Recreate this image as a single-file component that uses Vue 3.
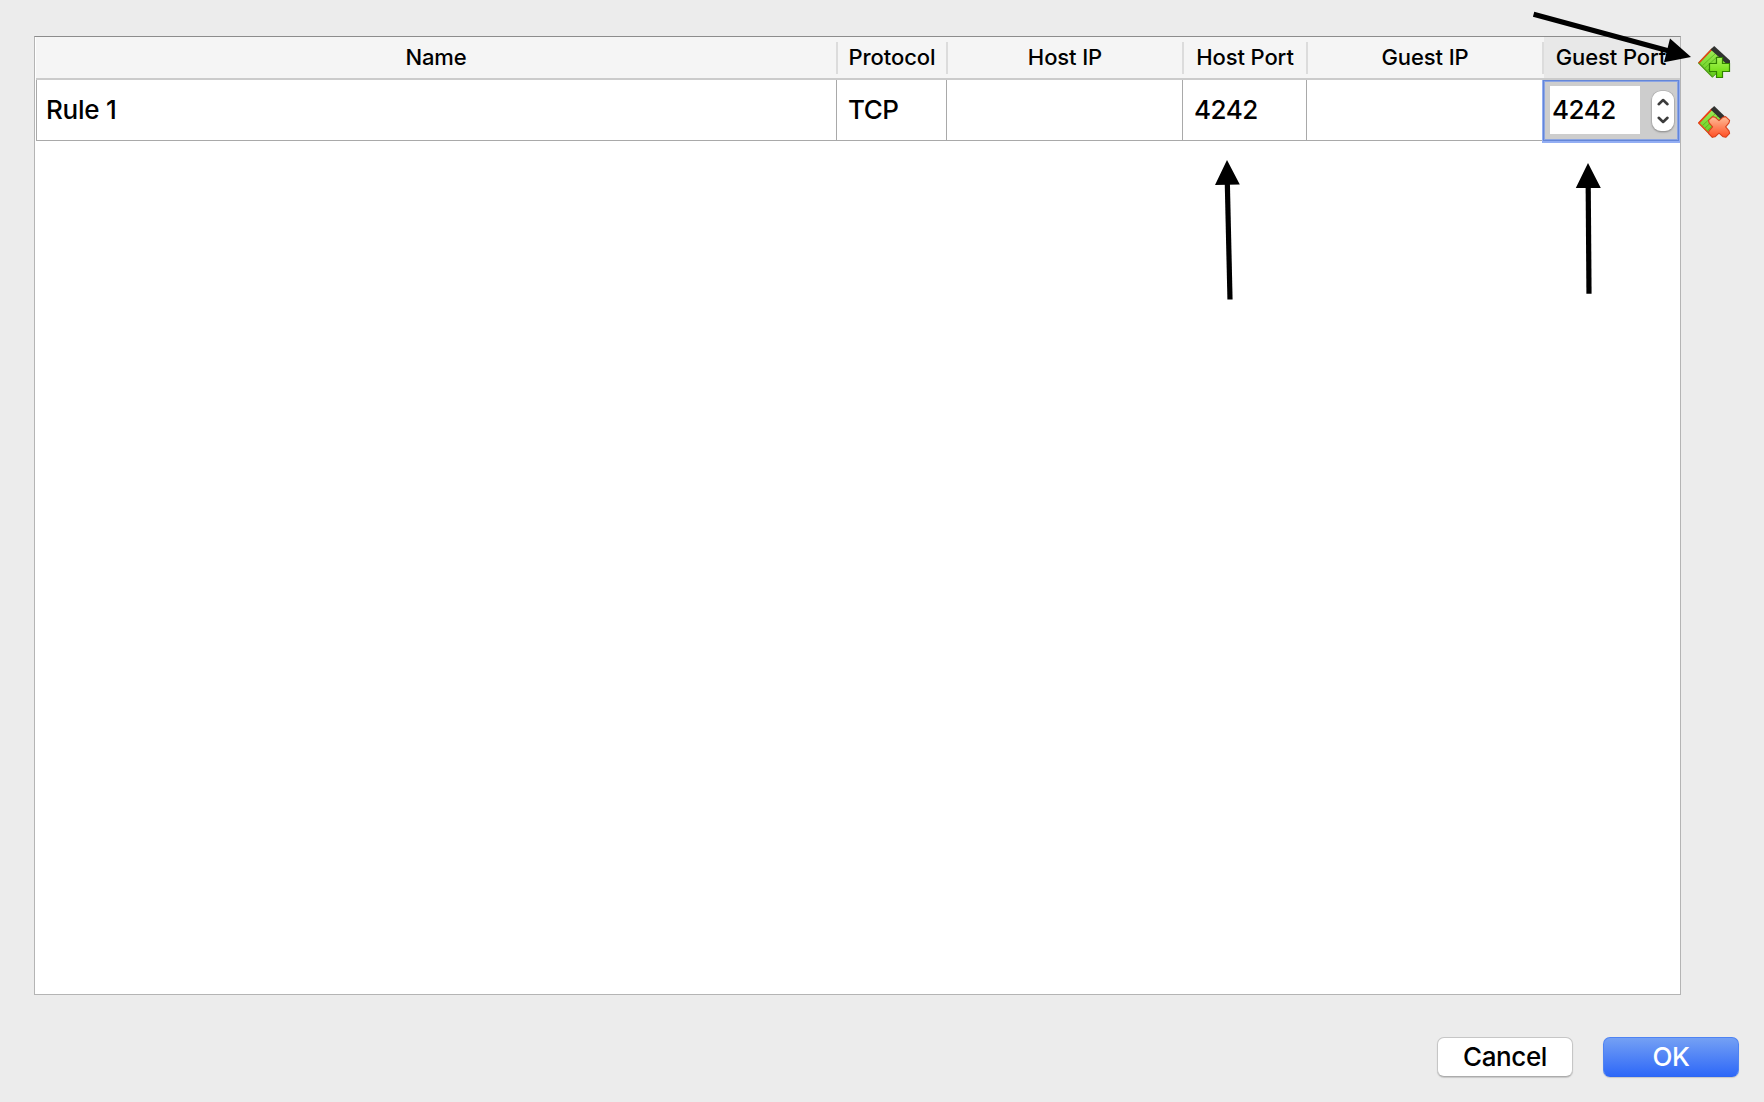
<script setup>
const columns = [
  { title: 'Name', value: 'Rule 1', cls: 'name' },
  { title: 'Protocol', value: 'TCP', cls: 'proto' },
  { title: 'Host IP', value: '', cls: 'hip' },
  { title: 'Host Port', value: '4242', cls: 'hport' },
  { title: 'Guest IP', value: '', cls: 'gip' },
]
</script>

<template>
  <div class="dialog">
    <div class="main">
      <div class="table">
        <div class="row head">
          <div v-for="c in columns" :key="c.title" class="th" :class="c.cls"><span>{{ c.title }}</span></div>
          <div class="th gport"><span>Guest Port</span></div>
        </div>
        <div class="row body">
          <div v-for="c in columns" :key="c.title" class="td" :class="c.cls"><span>{{ c.value }}</span></div>
          <div class="editor">
            <div class="field"><span>4242</span></div>
            <div class="stepper">
              <svg width="22" height="40" viewBox="0 0 22 40" fill="none" stroke="#3c3c3c" stroke-width="2.6" stroke-linecap="round" stroke-linejoin="round">
                <path d="M6.7 13.2 L11.1 9 L15.5 13.2 M6.7 26.8 L11.1 31 L15.5 26.8" />
              </svg>
            </div>
          </div>
        </div>
      </div>
      <div class="tools">
        <svg v-for="kind in ['add', 'remove']" :key="kind" width="34" height="32" viewBox="0 0 34 32">
          <defs>
            <linearGradient :id="kind + 'card'" x1="0" y1="0" x2="0" y2="1">
              <stop offset="0" stop-color="#a2ec58" /><stop offset="1" stop-color="#5fca18" />
            </linearGradient>
            <linearGradient :id="kind + 'mark'" x1="0" y1="0" x2="0" y2="1">
              <stop offset="0" :stop-color="kind === 'add' ? '#a9f45a' : '#ffbd98'" />
              <stop offset="1" :stop-color="kind === 'add' ? '#62d800' : '#ff4f24'" />
            </linearGradient>
          </defs>
          <path d="M.8 17 L14.5 2.5 L29 17 L14.5 31.2 Z" :fill="`url(#${kind}card)`" stroke="#4f9c1b" stroke-width="1" />
          <path d="M4.5 19.5 L18 7 M7 22 L20.5 9.5 M9.5 24.5 L23 12 M12 27 L24 16" stroke="#4fae16" stroke-width=".7" />
          <path d="M14.5 31 L.8 17 L14 3" fill="none" :stroke="kind === 'add' ? '#55a21e' : '#e64b20'" stroke-width="1.4" />
          <path d="M.8 17 L14 3" stroke="#ed4219" stroke-width="1.5" />
          <path v-if="kind === 'add'" d="M12.6 3.6 L16.2 0 L32 14.6 L32 17 L27.5 17 Z" fill="#303230" />
          <path v-else d="M12.6 3.6 L16.2 0 L27 10.5 L22.5 13 Z" fill="#303230" />
          <path v-if="kind === 'add'" d="M18.5 11.5 H24.5 V17.5 H31.5 V25.5 H24.5 V31.5 H18.5 V25.5 H11.5 V17.5 H18.5 Z" fill="url(#addmark)" stroke="#318200" stroke-width="1.2" />
          <path v-else d="M14.6 10.6 L17 11.2 L21 14.6 L25 11.2 L27.6 10.6 L31.6 14.4 L31 16.8 L27.6 20.9 L31 24.8 L31.6 27.4 L27.8 31.3 L25.2 30.8 L21 27.2 L17 30.8 L14.4 31.3 L10.5 27.4 L11.1 24.8 L14.6 20.9 L11.1 16.8 L10.5 14.4 Z" fill="url(#removemark)" stroke="#d8411c" stroke-width="1.1" stroke-linejoin="round" />
        </svg>
      </div>
    </div>
    <div class="buttons">
      <button class="btn cancel"><span>Cancel</span></button>
      <button class="btn ok"><span>OK</span></button>
    </div>
    <svg class="arrows" width="1764" height="320" viewBox="0 0 1764 320">
      <g stroke="#000" stroke-width="5.2">
        <path d="M1533.6 14.2 L1670 51.2" />
        <path d="M1227.3 182 L1230 299.5" />
        <path d="M1588.2 185 L1589 293.7" />
      </g>
      <path d="M1691 57 L1670 38.6 L1664 62.2 Z M1227 160 L1239.8 184.4 L1215 185 Z M1588 163 L1600.8 188 L1575.8 188 Z" />
    </svg>
  </div>
</template>

<style>
body { margin: 0; background: #ececec; }
</style>

<style scoped>
.dialog {
  position: relative;
  box-sizing: border-box;
  width: 1764px;
  height: 1102px;
  padding: 36px 25px 0 34px;
  background: #ececec;
  color: #000;
  font-family: Inter, "Liberation Sans", sans-serif;
  overflow: hidden;
}
.main { display: flex; gap: 17px; }
.table {
  box-sizing: border-box;
  width: 1647px;
  height: 959px;
  border: 1px solid #b4b4b4;
  border-top-color: #8c8c8c;
  padding-left: 1px;
  background: #fff;
}
.row { display: flex; }
.head { height: 41px; background: #f5f5f5; border-bottom: 2px solid #cbcbcb; }
.th {
  box-sizing: border-box;
  display: flex;
  align-items: center;
  justify-content: center;
  font-size: 22px;
  letter-spacing: -.1px;
  font-weight: 500;
  white-space: nowrap;
  padding-bottom: 1px;
  padding-right: 2px;
  background: linear-gradient(#dcdcdc, #dcdcdc) right 0 top 5px / 2px 32px no-repeat;
}
.name { width: 802px; }
.proto { width: 110px; }
.hip { width: 236px; }
.hport { width: 124px; }
.gip { width: 236px; }
.th.gport { width: 136px; background: #e8e8e8; }
.body { height: 61px; }
.td {
  box-sizing: border-box;
  display: flex;
  align-items: center;
  border-right: 1px solid #a9a9a9;
  border-bottom: 1px solid #a9a9a9;
  padding: 0 0 2px 11px;
  font-size: 26px;
  letter-spacing: -.5px;
  font-weight: 500;
}
.td.name { width: 801px; border-left: 1px solid #a9a9a9; padding-left: 9px; letter-spacing: -.25px; }
.td.gip { border-right: 0; width: 235px; }
.editor {
  box-sizing: border-box;
  width: 138px;
  height: 63px;
  border: 1px solid #93aef3;
  border-width: 0 1px 2px 1px;
  padding: 5px 4px 0 6px;
  display: flex;
  gap: 12px;
  background: #cdcdcd;
  box-shadow: inset 0 0 0 1px #6486d8, inset 0 0 0 2px #8ca5e3;
}
.field {
  box-sizing: border-box;
  width: 90px;
  height: 48px;
  margin-top: 1px;
  margin-left: 1px;
  padding: 0 0 2px 2px;
  display: flex;
  align-items: center;
  background: #fff;
  font-size: 26px;
  letter-spacing: -.5px;
  font-weight: 500;
}
.stepper {
  width: 22px;
  height: 40px;
  margin-top: 6px;
  border-radius: 9px;
  background: #fff;
  box-shadow: 0 0 0 .5px #a8a8a8, 0 1px 2px #777;
}
.stepper svg { display: block; }
.tools { display: flex; flex-direction: column; gap: 28px; padding-top: 10px; }
.tools svg { display: block; }
.buttons { display: flex; justify-content: flex-end; gap: 30px; margin-top: 42px; }
.btn {
  box-sizing: border-box;
  width: 136px;
  height: 40px;
  padding: 0 0 2px;
  border: 1px solid #c6c6c6;
  border-bottom-color: #acacac;
  border-radius: 7px;
  background: #fff;
  color: #000;
  font-family: inherit;
  font-size: 26px;
  letter-spacing: -.4px;
  font-weight: 500;
  box-shadow: 0 1px 1px #c8c8c8;
}
.ok {
  color: #fff;
  border: 1px solid #4e83f3;
  border-bottom-color: #2d66f2;
  background: linear-gradient(#74a0f4, #2e68f8);
}
.arrows { position: absolute; left: 0; top: 0; }
</style>
